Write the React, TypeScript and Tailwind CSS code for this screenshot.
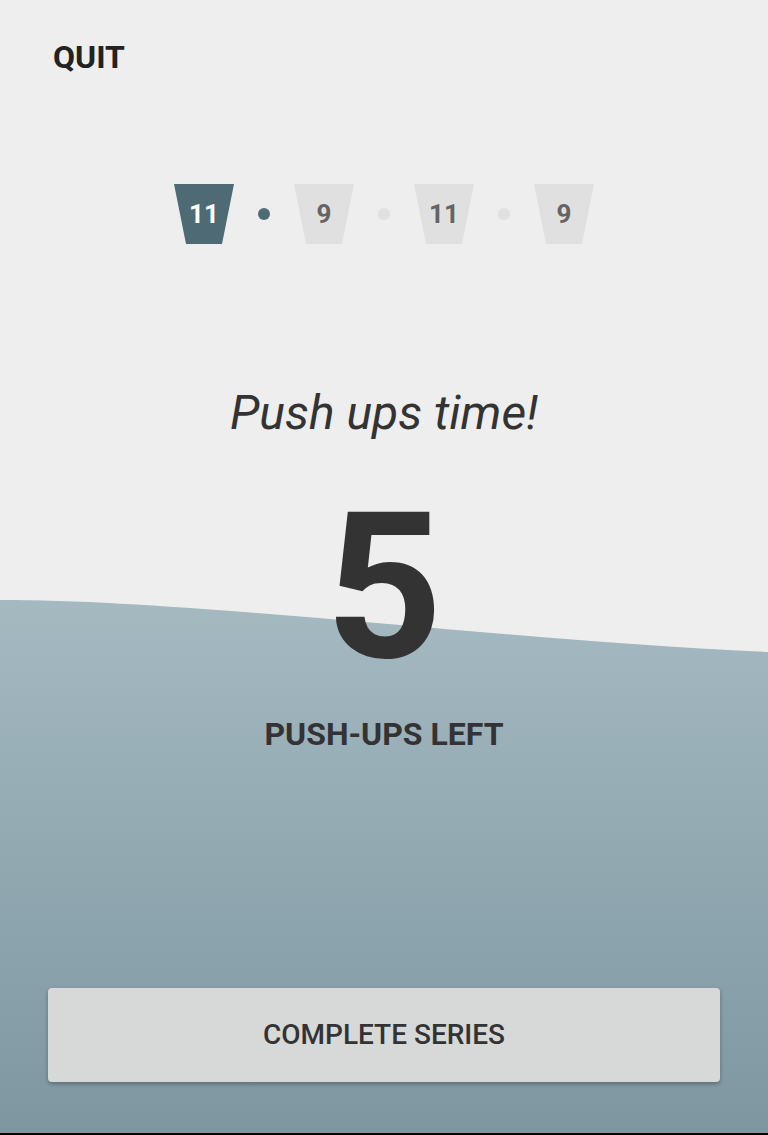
import React from "react";

const SETS = [11, 9, 11, 9];
const CURRENT = 0;

function SetPill({ reps, active }: { reps: number; active: boolean }) {
  return (
    <div
      className={`flex h-[60px] w-[60px] items-center justify-center text-[26px] font-bold leading-none [clip-path:polygon(0_0,100%_0,80%_100%,20%_100%)] ${
        active ? "bg-[#4e6b75] text-white" : "bg-[#e0e0e0] text-[#646464]"
      }`}
    >
      {reps}
    </div>
  );
}

export default function App() {
  return (
    <div className="relative h-[1135px] w-[768px] overflow-hidden bg-[#eeeeee] font-['Roboto','Liberation_Sans',sans-serif] text-[#333333]">
      {/* wave backdrop */}
      <svg className="absolute inset-0 h-full w-full" viewBox="0 0 768 1135" preserveAspectRatio="none">
        <defs>
          <linearGradient id="wave" x1="0" y1="600" x2="0" y2="1135" gradientUnits="userSpaceOnUse">
            <stop offset="0" stopColor="#a5b9c1" />
            <stop offset="1" stopColor="#7d97a1" />
          </linearGradient>
        </defs>
        <path d="M0 600 C 200 600, 500 640, 768 652 L 768 1135 L 0 1135 Z" fill="url(#wave)" />
      </svg>

      <div className="relative flex h-full flex-col">
        <div className="mt-[41px] ml-[53px] text-[32px] font-bold leading-none text-[#222222]">QUIT</div>

        {/* series */}
        <div className="mt-[111px] flex items-center justify-center">
          {SETS.map((reps, i) => (
            <React.Fragment key={i}>
              {i > 0 && (
                <div
                  className={`mx-6 h-3 w-3 rounded-full ${i - 1 === CURRENT ? "bg-[#4e6b75]" : "bg-[#e0e0e0]"}`}
                />
              )}
              <SetPill reps={reps} active={i === CURRENT} />
            </React.Fragment>
          ))}
        </div>

        <p className="mt-[145px] text-center text-[48px] italic leading-none">Push ups time!</p>

        <p className="mt-[49px] text-center text-[204px] font-bold leading-none">5</p>

        <p className="mt-[28px] text-center text-[32px] font-bold leading-none">PUSH-UPS LEFT</p>

        <button className="mx-12 mt-auto mb-[51px] flex h-[94px] items-center justify-center rounded-[4px] bg-[#d7d9d8] text-[28px] font-medium text-[#333333] shadow-[0_2px_4px_rgba(0,0,0,0.3)]">
          COMPLETE SERIES
        </button>

        <div className="h-[2px] bg-black" />
      </div>
    </div>
  );
}
